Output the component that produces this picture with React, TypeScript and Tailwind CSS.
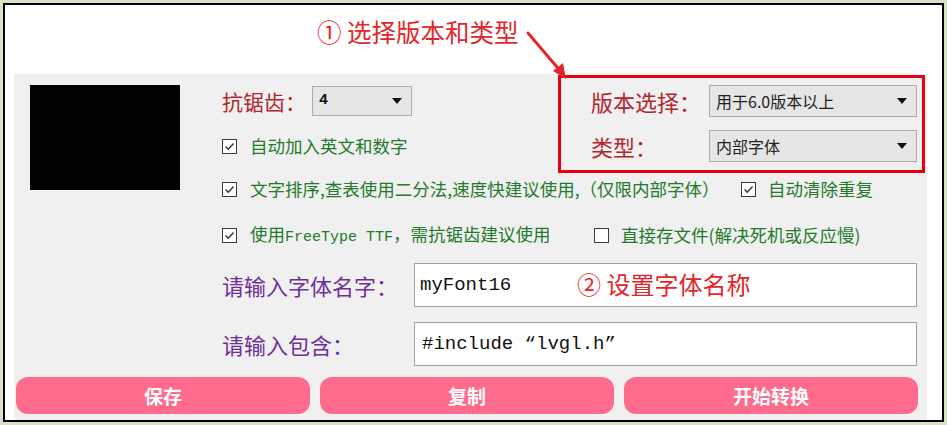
import React from 'react';

const cjk = "font-['Noto_Sans_CJK_SC','Noto_Sans',sans-serif]";
const mono = "font-['Liberation_Mono','Noto_Sans_CJK_SC',monospace]";

function Check({ checked }: { checked: boolean }) {
  return (
    <span className="w-[15px] h-[15px] border border-[#3c3c3c] bg-white flex items-center justify-center shrink-0">
      {checked && (
        <svg width="11" height="11" viewBox="0 0 11 11">
          <path d="M1.5 5.5 L4.3 8.3 L9.5 2.5" fill="none" stroke="#333" strokeWidth="1.4" />
        </svg>
      )}
    </span>
  );
}

function Caret() {
  return (
    <svg width="10" height="6" viewBox="0 0 10 6" className="shrink-0">
      <path d="M0 0 H10 L5 6 Z" fill="#111" />
    </svg>
  );
}

function Combo({ value, className, textClass }: { value: string; className: string; textClass: string }) {
  return (
    <div className={`bg-[#e6e6e6] border border-[#adadad] flex items-center justify-between pl-[6px] pr-[9px] ${className}`}>
      <span className={textClass}>{value}</span>
      <Caret />
    </div>
  );
}

export default function App() {
  return (
    <div className={`w-[947px] h-[425px] bg-[#d6e3c8] pt-[3px] pl-[3px] ${cjk}`}>
      <div className="relative w-[941px] h-[419px] border-2 border-black bg-white flex flex-col">
        {/* annotation 1 */}
        <div className="h-[69px] pl-[312px] pt-[13px] text-[24.5px] leading-[28px] text-[#e3262a]">
          ① 选择版本和类型
        </div>
        <svg className="absolute left-[517px] top-[22px]" width="50" height="58" viewBox="0 0 50 58">
          <path d="M6 6 L40 46" stroke="#e3262a" strokeWidth="3" strokeLinecap="round" />
          <path d="M44 52 L31 44 L41 36 Z" fill="#e3262a" />
        </svg>

        <div className="ml-[9px] w-[913px] flex-1 bg-[#f0f0f0] flex flex-col">
          <div className="flex">
            <div className="w-[208px] pl-[16px] pt-[11px] shrink-0">
              <div className="w-[150px] h-[105px] bg-black" />
            </div>

            <div className="flex-1 flex flex-col">
              <div className="flex h-[99px]">
                <div className="w-[336px] flex flex-col">
                  <div className="flex items-center mt-[12px] h-[30px]">
                    <span className="text-[21px] leading-none text-[#b3262e] w-[90px]">抗锯齿：</span>
                    <Combo value="4" className="w-[100px] h-[30px]" textClass={`${mono} font-bold text-[15px] text-[#111]`} />
                  </div>
                  <div className="flex items-center gap-[13px] mt-[20px] h-[20px]">
                    <Check checked />
                    <span className="text-[17.5px] leading-none text-[#237a2a]">自动加入英文和数字</span>
                  </div>
                </div>

                <div className="mt-[1px] w-[367px] h-[98px] border-[3px] border-[#e60012] pl-[30px] pr-[5px] pt-[7px] flex flex-col gap-[13px]">
                  <div className="flex items-center">
                    <span className="w-[118px] text-[22px] leading-none text-[#b3262e]">版本选择：</span>
                    <Combo value="用于6.0版本以上" className="w-[208px] h-[32px]" textClass="text-[16px] text-[#222]" />
                  </div>
                  <div className="flex items-center">
                    <span className="w-[118px] text-[22px] leading-none text-[#b3262e]">类型：</span>
                    <Combo value="内部字体" className="w-[208px] h-[32px]" textClass="text-[16px] text-[#222]" />
                  </div>
                </div>
              </div>

              <div className="flex items-center mt-[6px] h-[20px] text-[17.5px] leading-none text-[#237a2a] whitespace-nowrap">
                <Check checked />
                <span className="ml-[13px] w-[491px] shrink-0">文字排序,查表使用二分法,速度快建议使用,（仅限内部字体）</span>
                <Check checked />
                <span className="ml-[12px]">自动清除重复</span>
              </div>

              <div className="flex items-center mt-[26px] h-[20px] text-[17.5px] leading-none text-[#237a2a] whitespace-nowrap">
                <Check checked />
                <span className="ml-[13px] w-[344px] shrink-0">使用<span className={`${mono} text-[15px]`}>FreeType TTF</span>，需抗锯齿建议使用</span>
                <Check checked={false} />
                <span className="ml-[12px]">直接存文件(解决死机或反应慢)</span>
              </div>

              <div className="flex items-center mt-[18px]">
                <span className="w-[192px] text-[22px] leading-none text-[#6f2f9b]">请输入字体名字：</span>
                <div className="relative w-[503px] h-[44px] bg-white border border-[#a0a0a0] flex items-center pl-[5px]">
                  <span className={`${mono} text-[19px] text-[#111]`}>myFont16</span>
                  <span className="absolute left-[162px] top-[6px] text-[24px] leading-[28px] text-[#e3262a]">② 设置字体名称</span>
                </div>
              </div>

              <div className="flex items-center mt-[15px]">
                <span className="w-[192px] text-[22px] leading-none text-[#6f2f9b]">请输入包含：</span>
                <div className="w-[503px] h-[44px] bg-white border border-[#a0a0a0] flex items-center pl-[7px]">
                  <span className={`${mono} text-[19px] text-[#111]`}>#include “lvgl.h”</span>
                </div>
              </div>
            </div>
          </div>

          <div className="flex gap-[10px] pl-[2px] pr-[9px] mt-[11px]">
            {['保存', '复制', '开始转换'].map((t) => (
              <button key={t} className="flex-1 h-[37px] rounded-[12px] bg-[#ff6b8d] text-white font-bold text-[19px] leading-none">
                {t}
              </button>
            ))}
          </div>
        </div>
      </div>
    </div>
  );
}
